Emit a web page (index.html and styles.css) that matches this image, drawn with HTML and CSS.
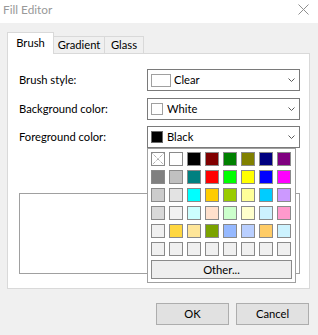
FILE: index.html
```html
<!DOCTYPE html>
<html>
<head>
<meta charset="utf-8">
<title>Fill Editor</title>
<link rel="stylesheet" href="styles.css">
</head>
<body>
<div class="window">
  <div class="titlebar">
    <span class="title">Fill Editor</span>
    <svg class="close" width="11" height="11" viewBox="0 0 11 11"><path d="M0.5 0.5L10.5 10.5M10.5 0.5L0.5 10.5" stroke="#8f8f8f" stroke-width="1" fill="none"/></svg>
  </div>
  <div class="main">
    <div class="tabs">
      <div class="tab active">Brush</div>
      <div class="tab">Gradient</div>
      <div class="tab">Glass</div>
    </div>
    <div class="panel">
      <div class="form">
        <span class="label">Brush style:</span>
        <div class="combo">
          <span class="sw sw-clear"></span><span class="ctext">Clear</span>
          <svg class="chev" width="7" height="4" viewBox="0 0 7 4"><path d="M0.5 0.5L3.5 3.5L6.5 0.5" stroke="#5a5a5a" fill="none"/></svg>
        </div>
        <span class="label">Background color:</span>
        <div class="combo">
          <span class="sw sw-white"></span><span class="ctext">White</span>
          <svg class="chev" width="7" height="4" viewBox="0 0 7 4"><path d="M0.5 0.5L3.5 3.5L6.5 0.5" stroke="#5a5a5a" fill="none"/></svg>
        </div>
        <span class="label">Foreground color:</span>
        <div class="combo open">
          <span class="sw sw-black"></span><span class="ctext">Black</span>
          <svg class="chev" width="7" height="4" viewBox="0 0 7 4"><path d="M0.5 0.5L3.5 3.5L6.5 0.5" stroke="#5a5a5a" fill="none"/></svg>
          <div class="popup">
            <div class="grid">
              <span class="cell none"><svg width="12" height="12" viewBox="0 0 12 12"><path d="M0.5 0.5L11.5 11.5M11.5 0.5L0.5 11.5" stroke="#8a8a8a" stroke-dasharray="1 1" fill="none"/></svg></span>
              <span class="cell" style="background:#ffffff"></span>
              <span class="cell" style="background:#000000"></span>
              <span class="cell" style="background:#800000"></span>
              <span class="cell" style="background:#008000"></span>
              <span class="cell" style="background:#808000"></span>
              <span class="cell" style="background:#000080"></span>
              <span class="cell" style="background:#800080"></span>

              <span class="cell" style="background:#808080"></span>
              <span class="cell" style="background:#c0c0c0"></span>
              <span class="cell" style="background:#008080"></span>
              <span class="cell" style="background:#ff0000"></span>
              <span class="cell" style="background:#00ff00"></span>
              <span class="cell" style="background:#ffff00"></span>
              <span class="cell" style="background:#0000ff"></span>
              <span class="cell" style="background:#ff00ff"></span>

              <span class="cell" style="background:#cccccc"></span>
              <span class="cell" style="background:#e3e3e3"></span>
              <span class="cell" style="background:#00ffff"></span>
              <span class="cell" style="background:#ffcc00"></span>
              <span class="cell" style="background:#99cc00"></span>
              <span class="cell" style="background:#ffff99"></span>
              <span class="cell" style="background:#00ccff"></span>
              <span class="cell" style="background:#cc99ff"></span>

              <span class="cell" style="background:#d9d9d9"></span>
              <span class="cell" style="background:#f2f2f2"></span>
              <span class="cell" style="background:#ccffff"></span>
              <span class="cell" style="background:#ffe0cc"></span>
              <span class="cell" style="background:#ccffcc"></span>
              <span class="cell" style="background:#ffffcc"></span>
              <span class="cell" style="background:#ccf2ff"></span>
              <span class="cell" style="background:#ff99cc"></span>

              <span class="cell" style="background:#f0f0f0"></span>
              <span class="cell" style="background:#ffd740"></span>
              <span class="cell" style="background:#ffe699"></span>
              <span class="cell" style="background:#7ba300"></span>
              <span class="cell" style="background:#96b9ff"></span>
              <span class="cell" style="background:#b9cfff"></span>
              <span class="cell" style="background:#ffcc66"></span>
              <span class="cell" style="background:#cdf3ff"></span>

              <span class="cell empty"></span>
              <span class="cell empty"></span>
              <span class="cell empty"></span>
              <span class="cell empty"></span>
              <span class="cell empty"></span>
              <span class="cell empty"></span>
              <span class="cell empty"></span>
              <span class="cell empty"></span>
            </div>
            <div class="other">Other...</div>
          </div>
        </div>
      </div>
      <div class="preview"></div>
    </div>
    <div class="buttons">
      <div class="btn">OK</div>
      <div class="btn">Cancel</div>
    </div>
  </div>
</div>
</body>
</html>
```

FILE: styles.css
```css
* { box-sizing: border-box; }
html, body {
  margin: 0;
  padding: 0;
  background: #f0f0f0;
}
body {
  font-family: Lato, "Noto Sans", sans-serif;
  font-size: 11.2px;
  color: #000;
}
.window {
  width: 318px;
  height: 335px;
  background: #f0f0f0;
  overflow: hidden;
}
.titlebar {
  height: 23px;
  background: #ffffff;
  display: flex;
  align-items: center;
  justify-content: space-between;
  padding: 0 9px 4px 3px;
}
.title {
  color: #999999;
  font-size: 11.8px;
  line-height: 14px;
}
.main {
  padding: 9px 8px 0 7px;
}
.tabs {
  display: flex;
  align-items: flex-end;
  height: 21px;
  position: relative;
  z-index: 1;
}
.tab {
  height: 17px;
  border: 1px solid #d9d9d9;
  border-bottom: none;
  background: #f0f0f0;
  line-height: 15px;
  padding: 0;
  margin-left: -1px;
  white-space: nowrap;
  text-align: center;
}
.tab.active {
  height: 22px;
  margin-bottom: -1px;
  background: #ffffff;
  margin-left: 0;
  padding: 1px 0 0 0;
  line-height: 18px;
  width: 47px;
}
.tab:nth-child(2) { width: 52px; }
.tab:nth-child(3) { width: 40px; }
.panel {
  width: 303px;
  height: 236px;
  background: #ffffff;
  border: 1px solid #d9d9d9;
  padding: 15px 0 0 11px;
}
.form {
  display: grid;
  grid-template-columns: 128px 153px;
  grid-auto-rows: 22px;
  row-gap: 6.5px;
  align-items: center;
}
.label {
  line-height: 14px;
}
.combo {
  height: 22px;
  border: 1px solid #7a7a7a;
  background: #ffffff;
  display: flex;
  align-items: center;
  padding: 0 4px 0 3px;
  position: relative;
}
.sw {
  display: block;
  flex: none;
  border: 1px solid #a0a0a0;
  background: #ffffff;
  margin-right: 4px;
}
.sw-clear { width: 20px; height: 13px; margin-right: 3px; }
.sw-white { width: 12px; height: 12px; }
.sw-black { width: 12px; height: 12px; background: #000000; border-color: #6a6a6a; }
.ctext {
  line-height: 14px;
  color: #000;
}
.chev {
  margin-left: auto;
  display: block;
}
.popup {
  position: absolute;
  left: -1px;
  top: calc(100% + 1px);
  width: 149px;
  background: #ffffff;
  border: 1px solid #a0a0a0;
  padding: 3px;
  z-index: 5;
}
.grid {
  display: grid;
  grid-template-columns: repeat(8, 14px);
  grid-auto-rows: 14px;
  gap: 4px;
}
.cell {
  display: block;
  border: 1px solid #8a8a8a;
}
.cell svg { display: block; }
.cell.none { background: #ffffff; }
.cell.empty { background: #f0f0f0; }
.other {
  margin-top: 4px;
  height: 19px;
  border: 1px solid #8a8a8a;
  background: #eeeeee;
  text-align: center;
  line-height: 17px;
}
.preview {
  margin-top: 45px;
  width: 281px;
  height: 81px;
  border: 1px solid #a0a0a0;
  background: #ffffff;
}
.buttons {
  display: flex;
  justify-content: flex-end;
  gap: 7px;
  margin-top: 14px;
  padding-right: 1px;
}
.btn {
  width: 73px;
  height: 22px;
  border: 1px solid #adadad;
  background: #e1e1e1;
  text-align: center;
  line-height: 19px;
}
```
